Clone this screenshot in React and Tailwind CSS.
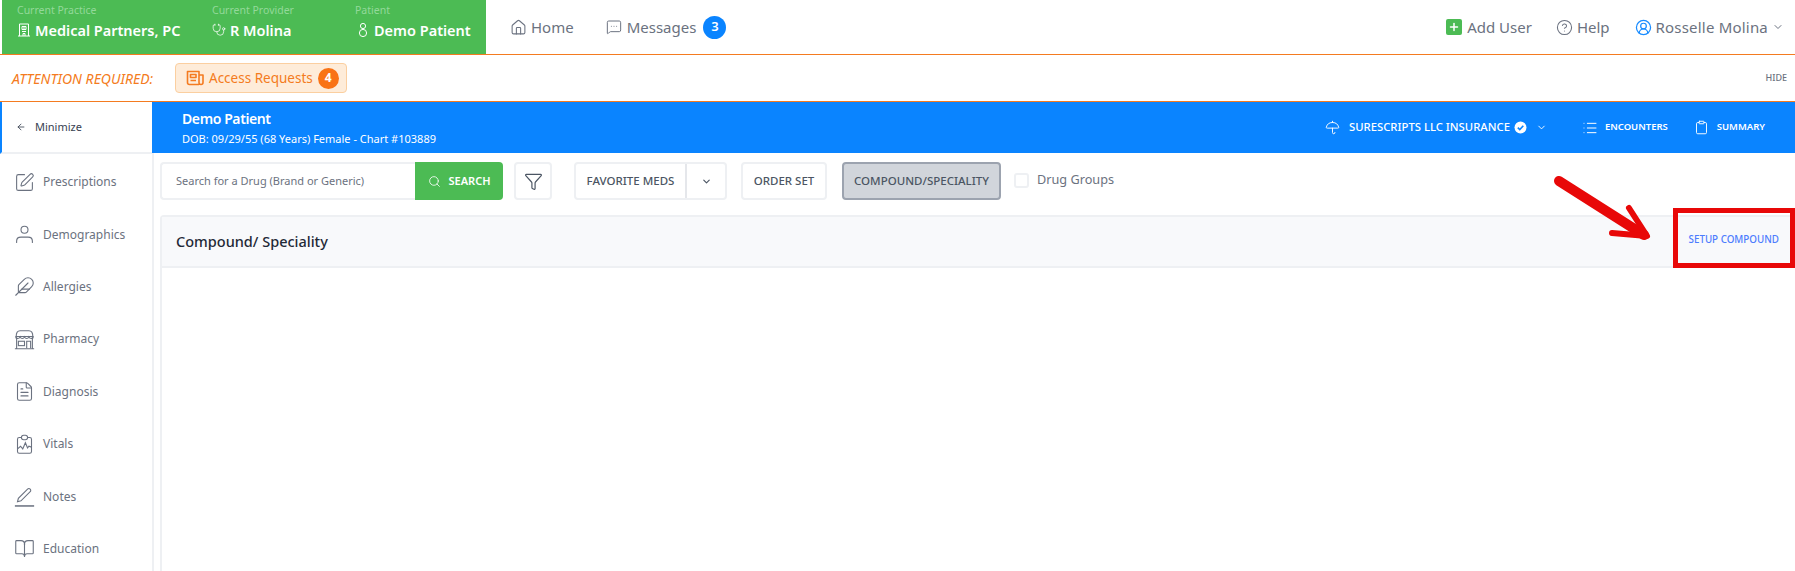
import {
  Home, MessageSquareMore, CircleHelp, CircleUserRound, ChevronDown, ArrowLeft, Umbrella, List, Clipboard,
  Search, Funnel, SquarePen, Feather, FileText, BookOpen, Stethoscope, Plus,
} from 'lucide-react';

const sideItems = [
  { title: "Prescriptions", icon: SquarePen },
  { title: "Demographics", icon: PersonIcon },
  { title: "Allergies", icon: Feather },
  { title: "Pharmacy", icon: ShopIcon },
  { title: "Diagnosis", icon: FileText },
  { title: "Vitals", icon: VitalsIcon },
  { title: "Notes", icon: NotesIcon },
  { title: "Education", icon: BookOpen },
];

function PersonIcon(props) {
  return (
    <svg width={props.size} height={props.size} viewBox="0 0 24 24" fill="none" stroke="currentColor" strokeWidth={props.strokeWidth} strokeLinecap="round" className={props.className}>
      <circle cx="12" cy="6.5" r="4" />
      <path d="M3 21v-1.5c0-2.8 2.2-4.5 5-4.5h8c2.8 0 5 1.7 5 4.5V21" />
    </svg>
  );
}

function ShopIcon(props) {
  return (
    <svg width={props.size} height={props.size} viewBox="0 0 24 24" fill="none" stroke="currentColor" strokeWidth={props.strokeWidth} className={props.className}>
      <path d="M2.5 8.5C2.5 4 4 2 7 2h10c3 0 4.5 2 4.5 6.5" />
      <path d="M1.5 8.5h21M3 9v13M21 9v13M1 22.5h22" />
      <path d="M2 9c0 2.5 4 2.5 5 0 1 2.5 4 2.5 5 0 1 2.5 4 2.5 5 0 1 2.5 5 2.5 5 0" />
      <rect x="5" y="14" width="7" height="5" />
      <path d="M14.5 22v-8h4.5v8" />
    </svg>
  );
}

function VitalsIcon(props) {
  return (
    <svg width={props.size} height={props.size} viewBox="0 0 24 24" fill="none" stroke="currentColor" strokeWidth={props.strokeWidth} className={props.className}>
      <path d="M8 4H6a2 2 0 0 0-2 2v14a2 2 0 0 0 2 2h12a2 2 0 0 0 2-2V6a2 2 0 0 0-2-2h-2" />
      <rect x="8.5" y="1.5" width="7" height="5" rx="2.5" />
      <path d="M4 17l3.5-3 2.5 3 3-7 2.5 6 1.5-2 3 1" />
    </svg>
  );
}

function NotesIcon(props) {
  return (
    <svg width={props.size} height={props.size} viewBox="0 0 24 24" fill="none" stroke="currentColor" strokeWidth={props.strokeWidth} className={props.className}>
      <path d="M4 18l1-4L15.5 3.5a2 2 0 0 1 3 3L8 17z" />
      <path d="M1 22.8h22" strokeWidth="1.75" />
    </svg>
  );
}

function PatientIcon({ className }) {
  return (
    <svg width="14" height="16" viewBox="0 0 14 16" fill="none" stroke="currentColor" strokeWidth="1" className={className}>
      <circle cx="7" cy="4" r="2.6" />
      <circle cx="7" cy="11" r="3.6" />
    </svg>
  );
}

function BuildingIcon({ className }) {
  return (
    <svg width="14" height="14" viewBox="0 0 14 14" fill="none" stroke="currentColor" strokeWidth="1" className={className}>
      <path d="M2.5 13V1h9v12M1 13h12" />
      <path d="M5 3.5h4v3H5zM5 8.5h4M7 3.5v3M6 13v-2.5h2V13" />
    </svg>
  );
}

function NewsIcon({ className }) {
  return (
    <svg width="18" height="18" viewBox="0 0 18 18" fill="none" stroke="currentColor" strokeWidth="1.6" strokeLinejoin="round" className={className}>
      <path d="M13 15.5H3.5a2 2 0 0 1-2-2V2.5h11.5v11a2 2 0 0 0 2 2 2 2 0 0 0 2-2V6H13" />
      <path d="M4.5 5.5h5.5v3H4.5zM4.5 11.5h5.5" />
    </svg>
  );
}

function VerifiedIcon({ className }) {
  return (
    <svg width="13" height="13" viewBox="0 0 13 13" className={className}>
      <circle cx="6.5" cy="6.5" r="6" fill="white" />
      <path d="M3.8 6.6l2 2 3.5-3.8" fill="none" stroke="#0a84ff" strokeWidth="1.6" />
    </svg>
  );
}

const GreenCell = ({ label, icon, value, className }) => (
  <div className={`shrink-0 flex flex-col ${className}`}>
    <span className="text-[10.5px] leading-[14px] text-[#93d99a]">{label}</span>
    <div className="flex items-center gap-[4px] mt-[3px] text-white">
      {icon}
      <span className="text-[14.5px] leading-[20px] font-semibold whitespace-nowrap">{value}</span>
    </div>
  </div>
);

const TopBar = () => (
  <header className="h-[54px] flex justify-between bg-white pl-[2px] pr-[11px] shadow-[0_1px_3px_rgba(0,0,0,0.1)]">
    <div className="flex items-stretch">
      <div className="w-[484px] shrink-0 bg-[#4cbb54] flex pl-[15px] pt-[3px]">
        <GreenCell className="w-[195px]" label="Current Practice" value="Medical Partners, PC" icon={<BuildingIcon />} />
        <GreenCell className="w-[143px]" label="Current Provider" value="R Molina" icon={<Stethoscope size={14} strokeWidth={1.25} />} />
        <GreenCell label="Patient" value="Demo Patient" icon={<PatientIcon className="ml-[1px]" />} />
      </div>
      <nav className="flex items-center text-[15px] text-[#6b7280] ml-[24px]">
        <Home size={17} strokeWidth={1.5} />
        <span className="ml-[4px]">Home</span>
        <MessageSquareMore size={16} strokeWidth={1.5} className="ml-[32px]" />
        <span className="ml-[5px]">Messages</span>
        <span className="ml-[7px] w-[23px] h-[23px] rounded-full bg-[#0a84ff] text-white text-[13px] font-semibold flex items-center justify-center">3</span>
      </nav>
    </div>
    <div className="flex items-center text-[15px] text-[#6b7280]">
      <span className="w-[16px] h-[16px] rounded-[2px] bg-[#4cbb54] flex items-center justify-center">
        <Plus size={12} strokeWidth={3} className="text-white" />
      </span>
      <span className="ml-[5px]">Add User</span>
      <CircleHelp size={17} strokeWidth={1.5} className="ml-[24px]" />
      <span className="ml-[4px]">Help</span>
      <CircleUserRound size={17} strokeWidth={1.75} className="ml-[25px] text-[#1a8cff]" />
      <span className="ml-[4px] tracking-[0.2px]">Rosselle Molina</span>
      <ChevronDown size={12} strokeWidth={2} className="ml-[4px]" />
    </div>
  </header>
);

const AttentionBar = () => (
  <div className="h-[48px] flex items-center justify-between border-y border-[#f47b20] bg-white pl-[12px] pr-[8px]">
    <div className="flex items-center">
      <span className="w-[163px] text-[14px] italic text-[#f47b20]">ATTENTION REQUIRED:</span>
      <div className="h-[30px] w-[172px] flex items-center rounded-[4px] border border-[#fbcfa0] bg-[#feecd9] pl-[10px] text-[13.5px] text-[#f47b20]">
        <NewsIcon />
        <span className="ml-[5px]">Access Requests</span>
        <span className="ml-[5px] w-[21px] h-[21px] rounded-full bg-[#f97316] text-white text-[12px] font-bold flex items-center justify-center">4</span>
      </div>
    </div>
    <span className="text-[9px] font-medium text-[#6b7280]">HIDE</span>
  </div>
);

const Sidebar = () => (
  <aside className="w-[152px] shrink-0 bg-white">
    <div className="h-[52px] flex items-center border-l-2 border-[#0a84ff] border-b-2 border-b-[#eef0f3] pl-[14px] text-[11px] text-[#374151]">
      <ArrowLeft size={10} strokeWidth={2} />
      <span className="ml-[9px]">Minimize</span>
    </div>
    <ul className="pt-[2px]">
      {sideItems.map((item) => (
        <li key={item.title} className="h-[52.4px] flex items-center pl-[14px] text-[12px] text-[#6b7280]">
          <item.icon size={21} strokeWidth={1.25} className="shrink-0" />
          <span className="ml-[8px]">{item.title}</span>
        </li>
      ))}
    </ul>
  </aside>
);

const PatientBar = () => (
  <div className="h-[51px] flex items-center justify-between bg-[#0a84ff] text-white pl-[30px] pr-[30px]">
    <div>
      <div className="text-[14px] leading-[18px] font-semibold tracking-[-0.4px]">Demo Patient</div>
      <div className="text-[11px] leading-[15px] mt-[3px]">DOB: 09/29/55 (68 Years) Female - Chart #103889</div>
    </div>
    <div className="flex items-center">
      <Umbrella size={15} strokeWidth={1.5} />
      <span className="ml-[9px] text-[11.3px] font-medium">SURESCRIPTS LLC INSURANCE</span>
      <VerifiedIcon className="ml-[4px]" />
      <ChevronDown size={11} strokeWidth={2} className="ml-[9px]" />
      <List size={16} strokeWidth={1.5} className="ml-[35px]" />
      <span className="ml-[7px] text-[9.5px] font-semibold">ENCOUNTERS</span>
      <Clipboard size={15} strokeWidth={1.5} className="ml-[26px]" />
      <span className="ml-[8px] text-[9.5px] font-semibold">SUMMARY</span>
    </div>
  </div>
);

const Toolbar = () => (
  <div className="h-[62px] flex items-start pl-[6px] pt-[9px] text-[11.5px] font-medium text-[#4b5563]">
    <div className="w-[255px] h-[38px] flex items-center rounded-l-[4px] border-2 border-r-0 border-[#eef0f3] pl-[14px] text-[11px] font-normal text-[#6b7280]">
      Search for a Drug (Brand or Generic)
    </div>
    <button className="w-[88px] h-[38px] flex items-center justify-center gap-[8px] rounded-r-[4px] bg-[#4cbb54] text-white text-[11px] font-semibold">
      <Search size={13} strokeWidth={1.5} />
      SEARCH
    </button>
    <button className="ml-[11px] w-[38px] h-[38px] flex items-center justify-center rounded-[4px] border-2 border-[#eef0f3] text-[#4b5563]">
      <Funnel size={19} strokeWidth={1.5} />
    </button>
    <div className="ml-[22px] h-[38px] flex rounded-[4px] border-2 border-[#eef0f3]">
      <button className="w-[111px] border-r-2 border-[#e5e7eb]">FAVORITE MEDS</button>
      <button className="w-[38px] flex items-center justify-center">
        <ChevronDown size={11} strokeWidth={2.5} />
      </button>
    </div>
    <button className="ml-[14px] w-[86px] h-[38px] rounded-[4px] border-2 border-[#eef0f3]">ORDER SET</button>
    <button className="ml-[15px] w-[159px] h-[38px] rounded-[4px] border-2 border-[#9ca3af] bg-[#d1d5db]">COMPOUND/SPECIALITY</button>
    <span className="ml-[13px] mt-[11px] w-[15px] h-[15px] rounded-[3px] border-2 border-[#eef0f3]" />
    <span className="ml-[8px] mt-[8px] text-[12.7px] font-normal text-[#6b7280]">Drug Groups</span>
  </div>
);

const App = () => (
  <div className="relative w-[1795px] h-[571px] overflow-hidden bg-white font-['Noto_Sans',sans-serif]">
    <TopBar />
    <AttentionBar />
    <div className="flex h-[469px]">
      <Sidebar />
      <main className="flex-1 min-w-0">
        <PatientBar />
        <div className="h-full border-l-2 border-[#eef0f3]">
          <Toolbar />
          <section className="ml-[6px] h-[400px] rounded-t-[4px] border-2 border-r-0 border-[#eef0f3]">
            <div className="h-[51px] flex items-center justify-between bg-[#f8f9fb] border-b-2 border-[#eef0f3] pl-[14px] pr-[16px]">
              <span className="text-[14.5px] font-medium text-[#1f2937]">Compound/ Speciality</span>
              <span className="text-[9.8px] font-medium text-[#4d7cfe] -mt-[2px]">SETUP COMPOUND</span>
            </div>
          </section>
        </div>
      </main>
    </div>

    {/* red callout drawn over the screenshot */}
    <div className="absolute left-[1673px] top-[208px] w-[122px] h-[60px] border-[5px] border-[#e80808]" />
    <svg className="absolute left-[1550px] top-[170px]" width="110" height="80" viewBox="0 0 110 80" fill="none" stroke="#e80808" strokeLinecap="round" strokeLinejoin="round">
      <path d="M9 11L94 65" strokeWidth="10" />
      <path d="M79 38L97 66L62 63" strokeWidth="6" />
    </svg>
  </div>
);

export default App;
